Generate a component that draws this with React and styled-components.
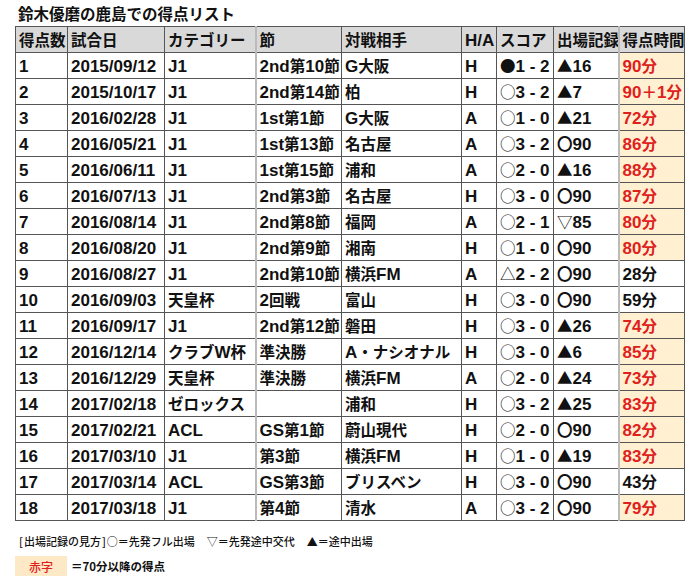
import styled, { createGlobalStyle } from 'styled-components';

const GlobalStyle = createGlobalStyle`
  body {
    margin: 0;
    background: #fff;
    font-family: "Liberation Sans", "Noto Sans CJK JP", sans-serif;
    color: #111;
  }
`;

const Page = styled.div`
  width: 700px;
  padding: 3px 0 0 15px;
  box-sizing: border-box;
`;

const Title = styled.h1`
  margin: 0 0 3px 3px;
  font-family: "Noto Sans CJK JP", sans-serif;
  font-size: 15.5px;
  font-weight: 700;
  line-height: 20px;
`;

const Table = styled.table`
  border-collapse: collapse;
  table-layout: fixed;
  width: 669px;
  font-size: 17px;
  font-weight: 700;
`;

const Row = styled.tr`
  height: 26px;
`;

const Cell = styled.td`
  border: 1px solid #555;
  border-left: ${p => (p.$soft ? '2px solid #bbb' : '1px solid #555')};
  padding: 1px 0 0 3px;
  white-space: nowrap;
  overflow: hidden;
  text-align: left;
  font-weight: 700;
  line-height: 23px;
  background: ${p => (p.$head ? '#d9d9d9' : p.$late ? '#fff0d2' : '#fff')};
  color: ${p => (p.$late ? '#e0201b' : '#111')};
`;

const Jp = styled.span`
  font-family: "Noto Sans CJK JP", sans-serif;
  font-size: 15.5px;
  line-height: 0;
`;

const Mark = styled.span`
  font-family: "Noto Sans CJK JP", sans-serif;
  font-size: 15.5px;
  line-height: 0;
  font-weight: ${p => (p.$thin ? 400 : 700)};
`;

const Legend = styled.div`
  margin-top: 12px;
  padding-left: 3px;
  font-size: 11px;
  font-family: "Noto Sans CJK JP", sans-serif;
  font-weight: 500;
  line-height: 16px;
  display: flex;
  gap: 12px;
`;

const Bracket = styled.span`
  margin: 0 1px;
`;

const KeyRow = styled.div`
  margin-top: 7px;
  display: flex;
  align-items: center;
  gap: 4px;
  font-size: 11.5px;
  font-family: "Noto Sans CJK JP", sans-serif;
  font-weight: 700;
`;

const KeyBox = styled.span`
  width: 52px;
  height: 20px;
  display: flex;
  align-items: center;
  justify-content: center;
  background: #fde9c6;
  color: #e0201b;
  font-weight: 500;
  font-size: 12px;
`;

// split a string into Latin / Japanese runs so each gets its own font size
const jpRe = /([\u3000-\u9fff\uff00-\uffef]+)/;
const Txt = ({ children }) =>
  String(children)
    .split(jpRe)
    .filter(Boolean)
    .map((s, i) => (jpRe.test(s) ? <Jp key={i}>{s}</Jp> : <span key={i}>{s}</span>));

const widths = [52, 97, 91, 86, 120, 35, 57, 65, 66];
const heads = ['得点数', '試合日', 'カテゴリー', '節', '対戦相手', 'H/A', 'スコア', '出場記録', '得点時間'];

const rows = [
  ['1', '2015/09/12', 'J1', '2nd第10節', 'G大阪', 'H', '●', '1 - 2', '▲', '16', '90分', true],
  ['2', '2015/10/17', 'J1', '2nd第14節', '柏', 'H', '○', '3 - 2', '▲', '7', '90＋1分', true],
  ['3', '2016/02/28', 'J1', '1st第1節', 'G大阪', 'A', '○', '1 - 0', '▲', '21', '72分', true],
  ['4', '2016/05/21', 'J1', '1st第13節', '名古屋', 'A', '○', '3 - 2', '〇', '90', '86分', true],
  ['5', '2016/06/11', 'J1', '1st第15節', '浦和', 'A', '○', '2 - 0', '▲', '16', '88分', true],
  ['6', '2016/07/13', 'J1', '2nd第3節', '名古屋', 'H', '○', '3 - 0', '〇', '90', '87分', true],
  ['7', '2016/08/14', 'J1', '2nd第8節', '福岡', 'A', '○', '2 - 1', '▽', '85', '80分', true],
  ['8', '2016/08/20', 'J1', '2nd第9節', '湘南', 'H', '○', '1 - 0', '〇', '90', '80分', true],
  ['9', '2016/08/27', 'J1', '2nd第10節', '横浜FM', 'A', '△', '2 - 2', '〇', '90', '28分', false],
  ['10', '2016/09/03', '天皇杯', '2回戦', '富山', 'H', '○', '3 - 0', '〇', '90', '59分', false],
  ['11', '2016/09/17', 'J1', '2nd第12節', '磐田', 'H', '○', '3 - 0', '▲', '26', '74分', true],
  ['12', '2016/12/14', 'クラブW杯', '準決勝', 'A・ナシオナル', 'H', '○', '3 - 0', '▲', '6', '85分', true],
  ['13', '2016/12/29', '天皇杯', '準決勝', '横浜FM', 'A', '○', '2 - 0', '▲', '24', '73分', true],
  ['14', '2017/02/18', 'ゼロックス', '', '浦和', 'H', '○', '3 - 2', '▲', '25', '83分', true],
  ['15', '2017/02/21', 'ACL', 'GS第1節', '蔚山現代', 'H', '○', '2 - 0', '〇', '90', '82分', true],
  ['16', '2017/03/10', 'J1', '第3節', '横浜FM', 'H', '○', '1 - 0', '▲', '19', '83分', true],
  ['17', '2017/03/14', 'ACL', 'GS第3節', 'ブリスベン', 'H', '○', '3 - 0', '〇', '90', '43分', false],
  ['18', '2017/03/18', 'J1', '第4節', '清水', 'A', '○', '3 - 2', '〇', '90', '79分', true],
];

export default function App() {
  return (
    <Page>
      <GlobalStyle />
      <Title>鈴木優磨の鹿島での得点リスト</Title>
      <Table>
        <colgroup>
          {widths.map((w, i) => <col key={i} style={{ width: w }} />)}
        </colgroup>
        <thead>
          <Row>
            {heads.map((h, i) => (
              <Cell as="th" key={h} $head $soft={i === 3 || i === 8}><Txt>{h}</Txt></Cell>
            ))}
          </Row>
        </thead>
        <tbody>
          {rows.map(r => (
            <Row key={r[0]}>
              <Cell>{r[0]}</Cell>
              <Cell>{r[1]}</Cell>
              <Cell><Txt>{r[2]}</Txt></Cell>
              <Cell $soft><Txt>{r[3]}</Txt></Cell>
              <Cell><Txt>{r[4]}</Txt></Cell>
              <Cell>{r[5]}</Cell>
              <Cell><Mark $thin={r[6] !== '●'}>{r[6]}</Mark>{r[7]}</Cell>
              <Cell><Mark $thin={r[8] === '▽'}>{r[8]}</Mark>{r[9]}</Cell>
              <Cell $soft $late={r[11]}><Txt>{r[10]}</Txt></Cell>
            </Row>
          ))}
        </tbody>
      </Table>
      <Legend>
        <span><Bracket>[</Bracket>出場記録の見方<Bracket>]</Bracket>○＝先発フル出場</span>
        <span>▽＝先発途中交代</span>
        <span>▲＝途中出場</span>
      </Legend>
      <KeyRow>
        <KeyBox>赤字</KeyBox>
        <span>＝70分以降の得点</span>
      </KeyRow>
    </Page>
  );
}
